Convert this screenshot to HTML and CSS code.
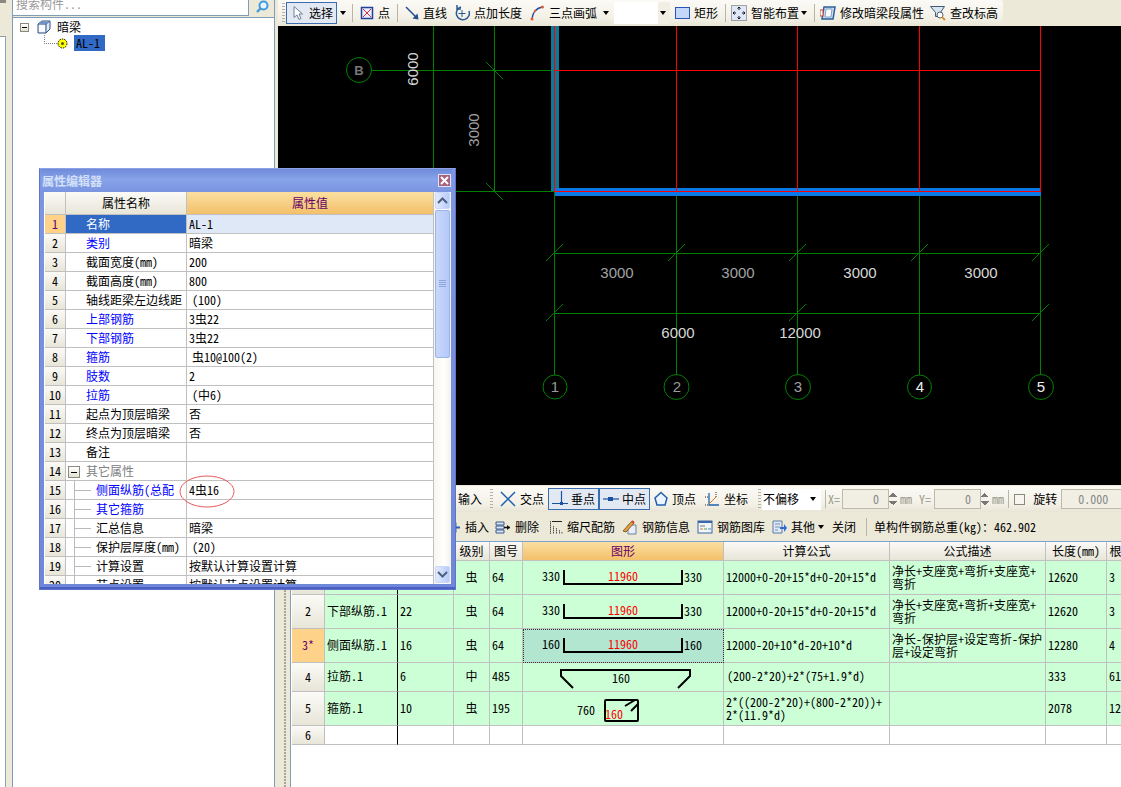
FILE: index.html
```html
<!DOCTYPE html>
<html lang="zh-CN">
<head>
<meta charset="utf-8">
<title>属性编辑器</title>
<link rel="stylesheet" href="styles.css">
</head>
<body>
<div class="app">
  <div class="rail"><div class="rail-tab"></div></div>
  <aside class="side">
    <div class="search">
      <div class="search-input"><span>搜索构件...</span></div>
      <div class="search-btn">
        <svg width="14" height="14" viewBox="0 0 14 14"><circle cx="8.5" cy="5.5" r="4" fill="#e8f4ff" stroke="#3f9be0" stroke-width="2"/><path d="M5.5 8.5 2 12" stroke="#3f9be0" stroke-width="2.4"/></svg>
      </div>
    </div>
    <div class="tree">
      <div class="tree-root">
        <span class="minus"></span>
        <svg class="cube" width="14" height="15" viewBox="0 0 14 15"><path d="M1 4 5 1h8v8l-4 4H1z" fill="#dfe9f7" stroke="#33507e"/><path d="M1 4h8v9M9 4l4-3" fill="none" stroke="#33507e"/><path d="M2 5h6v7H2z" fill="#f7fbff"/><path d="M5 1.500h8L9 4H1z" fill="#6f93c4"/></svg>
        <span>暗梁</span>
      </div>
      <div class="tree-leaf">
        <span class="dots"></span>
        <svg class="gear" width="11" height="11" viewBox="0 0 11 11"><circle cx="5.500" cy="5.500" r="4.500" fill="#ffff00" stroke="#000" stroke-dasharray="1.500 1"/><circle cx="5.500" cy="5.500" r="1.500" fill="#5a5a00"/></svg>
        <span class="leaf-sel">AL-1</span>
      </div>
    </div>
  </aside>

  <main class="main">
    <div class="top-wrap">
      <div class="bar-top">
        <span class="grip"></span>
        <div class="ti sel ml1"><svg width="12" height="16" viewBox="0 0 12 16"><path d="M2 1.500v11l3-2.500 2 4.500 2-1-2-4.500h3.500z" fill="#fff" stroke="#6f7f99"/></svg><span>选择</span></div>
        <span class="caret ml3"></span>
        <span class="sep ml6"></span>
        <div class="ti ml7"><svg width="14" height="14" viewBox="0 0 14 14"><rect x="1.500" y="1.500" width="11" height="11" fill="#e9eefc" stroke="#20409a" stroke-width="1.500"/><path d="m3 3 8 8M11 3l-8 8" stroke="#d03030"/></svg><span>点</span></div>
        <span class="sep ml7"></span>
        <div class="ti ml7"><svg width="14" height="16" viewBox="0 0 14 16"><path d="m1 2 11 11" stroke="#244f8f" stroke-width="1.500"/><path d="M13.500 14.500 12.500 8.500 7.500 13.500z" fill="#244f8f"/></svg><span>直线</span></div>
        <div class="ti ml7"><svg width="16" height="18" viewBox="0 0 16 18"><path d="M7 3a6.500 6.500 0 1 0 8 4" fill="none" stroke="#2a5a94" stroke-width="1.500"/><path d="M3 1v4h4" fill="none" stroke="#2a5a94" stroke-width="1.500"/><path d="M8 6v7M4.500 9.500h7" stroke="#2a5a94"/></svg><span>点加长度</span></div>
        <div class="ti ml8"><svg width="15" height="16" viewBox="0 0 15 16"><path d="M2 14Q3 4 12 2" fill="none" stroke="#2050a0" stroke-width="1.500"/><circle cx="2" cy="14" r="1.500" fill="#e06030"/><circle cx="5" cy="6" r="1.200" fill="#e06030"/><circle cx="12.500" cy="2" r="1.500" fill="#e06030"/></svg><span>三点画弧</span></div>
        <span class="caret ml6"></span>
        <div class="combo-top ml5"><span class="caret"></span></div>
        <div class="ti ml5"><svg width="15" height="12" viewBox="0 0 15 12"><rect x=".5" y=".5" width="14" height="11" fill="#c5d8fa" stroke="#2a55b8"/></svg><span>矩形</span></div>
        <span class="sep ml7"></span>
        <div class="ti ml5"><svg width="16" height="16" viewBox="0 0 16 16"><rect x=".5" y=".5" width="15" height="15" fill="#dfe8f8" stroke="#555" stroke-dasharray="1 1"/><path d="M8 2v3M6.500 3.500 8 2l1.500 1.500M8 14v-3M6.500 12.500 8 14l1.500-1.500M2 8h3M3.500 6.500 2 8l1.500 1.500M14 8h-3M12.500 6.500 14 8l-1.500 1.500" fill="none" stroke="#111"/></svg><span>智能布置</span></div>
        <span class="caret ml2"></span>
        <span class="sep ml7"></span>
        <div class="ti ml5"><svg width="16" height="16" viewBox="0 0 16 16"><path d="M4 2h11l-2 12H2z" fill="#cfe0f4" stroke="#2d5f96" stroke-width="1.500"/><path d="M6 4h6l-1 8H5z" fill="#fff" stroke="#7da0c8"/><rect x="0" y="5" width="3" height="6" fill="#fff" stroke="#d04030"/></svg><span>修改暗梁段属性</span></div>
        <div class="ti ml6"><svg width="16" height="16" viewBox="0 0 16 16"><path d="M.5 1.500h14l-4 6v4h-5v-4z" fill="#d8e4f0" stroke="#405a78"/><circle cx="10" cy="10" r="3" fill="#fff" stroke="#506070"/><path d="m12 12 3 3" stroke="#d89030" stroke-width="2"/></svg><span>查改标高</span></div>
      </div>
    </div>

    <div class="canvas-row">
      <svg class="canvas" width="843" height="459" viewBox="278 26 843 459">
        <g class="ln-g">
          <path d="M433.500 26V191M494.500 26V191M372 70.500H554M433 191.500H554"/>
          <path d="M554.500 191V375M676.500 191V375M797.500 191V375M919.500 191V375M1040.500 191V375"/>
          <path d="M554 253.500H1041M554 313.500H1041"/>
        </g>
        <g class="ln-d">
          <path d="M486 62 503 79M486 183 503 200"/>
          <path d="M546 261 563 244M668 261 685 244M789 261 806 244M911 261 928 244M1032 261 1049 244"/>
          <path d="M546 321 563 304M789 321 806 304M1032 321 1049 304"/>
        </g>
        <rect x="551" y="26" width="8" height="165" fill="#0c7a96"/>
        <rect x="555" y="188" width="486" height="8" fill="#0a78e6"/>
        <g class="ln-r">
          <path d="M554.500 26V191M676.500 26V191M797.500 26V191M919.500 26V191M1040.500 26V191"/>
          <path d="M554 70.500H1041M554 191.500H1041"/>
        </g>
        <g class="bub">
          <circle cx="359" cy="70" r="12.500"/>
          <circle cx="555" cy="387" r="12"/>
          <circle cx="676.500" cy="387" r="12.500"/>
          <circle cx="798" cy="387" r="12.500"/>
          <circle cx="919.500" cy="387" r="12"/>
          <circle cx="1041" cy="387" r="12.500"/>
        </g>
        <g class="dim">
          <text class="t-b" x="359" y="75" >B</text>
          <text class="t-g1" x="555" y="392">1</text>
          <text class="t-g1" x="677" y="392">2</text>
          <text class="t-g2" x="798" y="392">3</text>
          <text class="t-w" x="920" y="392">4</text>
          <text class="t-w" x="1041" y="392">5</text>
          <text class="t-g2" x="617" y="278">3000</text>
          <text class="t-g2" x="738" y="278">3000</text>
          <text class="t-l" x="860" y="278">3000</text>
          <text class="t-l" x="981" y="278">3000</text>
          <text class="t-l" x="678" y="338">6000</text>
          <text class="t-l" x="800" y="338">12000</text>
          <text class="t-l" transform="translate(418 69) rotate(-90)">6000</text>
          <text class="t-g2" transform="translate(479 130) rotate(-90)">3000</text>
        </g>
      </svg>
    </div>

    <div class="lower">
      <div class="split"></div>
      <div class="lower-main">
        <div class="bar b1">
          <span>输入</span>
          <span class="grip ml8"></span>
          <div class="ti ml7"><svg width="16" height="16" viewBox="0 0 16 16"><path d="m1 1 14 14M15 1 1 15" stroke="#2060b0" stroke-width="1.500"/></svg><span>交点</span></div>
          <div class="ti sel wide ml4"><svg width="16" height="16" viewBox="0 0 16 16"><path d="M9.500 0v12M0 12.500h16" stroke="#1c50a0" stroke-width="1.200"/><rect x="8" y="11" width="3" height="3" fill="#1c50a0"/></svg><span>垂点</span></div>
          <div class="ti sel wide jn"><svg width="16" height="16" viewBox="0 0 16 16"><path d="M0 8h16" stroke="#1c50a0" stroke-width="1.200"/><rect x="5" y="6" width="5" height="4" fill="#1c50a0"/></svg><span>中点</span></div>
          <div class="ti ml4"><svg width="14" height="16" viewBox="0 0 14 16"><path d="M7 1.500 13 7l-2 7H3L1 7z" fill="#eef4ff" stroke="#2060b0" stroke-width="1.500"/></svg><span>顶点</span></div>
          <div class="ti ml8"><svg width="16" height="16" viewBox="0 0 16 16"><path d="M5 2v12h10" fill="none" stroke="#2060b0" stroke-width="1.300"/><path d="m5 13 7-7" stroke="#d08020"/><path d="M1 6h3M1 14h3M12 1v3M12 5v2" stroke="#333" stroke-dasharray="1 1"/></svg><span>坐标</span></div>
          <span class="grip ml10"></span>
          <div class="combo ml1"><span>不偏移</span><span class="caret"></span></div>
          <span class="sep ml4"></span>
          <span class="off ml2">X=</span>
          <div class="num n1 ml2">0</div>
          <span class="spin"></span>
          <span class="off ml3">mm</span>
          <span class="off ml7">Y=</span>
          <div class="num n1 ml3">0</div>
          <span class="spin"></span>
          <span class="off ml3">mm</span>
          <span class="sep ml4"></span>
          <span class="check ml5"></span>
          <span class="ml8">旋转</span>
          <div class="num n2 ml4">0.000</div>
        </div>
        <div class="bar b2">
          <div class="ti"><svg width="14" height="14" viewBox="0 0 14 14"><rect x="1" y="3" width="8" height="9" fill="#dbe6f6" stroke="#4a6a9a"/><path d="M7 7.500h6" stroke="#2a5fb0" stroke-width="2"/></svg><span>插入</span></div>
          <div class="ti ml6"><svg width="16" height="16" viewBox="0 0 16 16"><path d="M1 3h8v3H1zM1 7h8v3H1zM1 11h8v3H1z" fill="#dbe6f6" stroke="#3a5a8a"/><path d="M9 8.500h6" stroke="#111" stroke-width="1.500"/><path d="m12 6 3 2.500-3 2.500" fill="#111"/></svg><span>删除</span></div>
          <div class="ti ml10"><svg width="14" height="16" viewBox="0 0 14 16"><path d="M1.500 2v13M4.500 7v8M7.500 9v6M10.500 11v4M13 13v2" stroke="#555" stroke-dasharray="1.500 .5"/><path d="M3 2.500h10" stroke="#222"/></svg><span>缩尺配筋</span></div>
          <div class="ti ml7"><svg width="16" height="16" viewBox="0 0 16 16"><path d="M6 6h8v9H6z" fill="#e8eef8" stroke="#6a7f9f"/><path d="m1 12 9-10 2 2-8 9z" fill="#e8a040" stroke="#80602a"/><path d="m10 2 2 2" stroke="#d04030" stroke-width="2"/></svg><span>钢筋信息</span></div>
          <div class="ti ml7"><svg width="16" height="16" viewBox="0 0 16 16"><rect x="1" y="2" width="14" height="12" fill="#f2f5fa" stroke="#3a68a8"/><path d="M1 2h14v2H1z" fill="#3a68a8"/><path d="M3 7h5" stroke="#777"/><path d="M3 10h3" stroke="#d08030"/><path d="M7 10h3" stroke="#50a050"/><path d="M11 10h3" stroke="#5080d0"/></svg><span>钢筋图库</span></div>
          <div class="ti ml7"><svg width="15" height="16" viewBox="0 0 15 16"><path d="M1 2h9v12H1z" fill="#dfe9f7" stroke="#5a7aa8"/><path d="M3 5h5M3 8h5M3 11h3" stroke="#7a8ea8"/><path d="M8 8h4V5l3 4-3 4v-3H8z" fill="#2a6fd0"/></svg><span>其他</span></div>
          <span class="caret ml3"></span>
          <span class="ml8">关闭</span>
          <span class="sep ml10"></span>
          <span class="ml7">单构件钢筋总重(kg)：462.902</span>
        </div>

        <div class="grid-wrap">
          <table class="grid">
            <colgroup>
              <col class="g0"><col class="g1"><col class="g2"><col class="g3"><col class="g4"><col class="g5"><col class="g6"><col class="g7"><col class="g8"><col class="g9">
            </colgroup>
            <thead>
              <tr class="gh">
                <th></th><th>筋号</th><th>直径(mm)</th><th>级别</th><th>图号</th><th class="hot">图形</th><th>计算公式</th><th>公式描述</th><th>长度(mm)</th><th>根数</th>
              </tr>
            </thead>
            <tbody>
              <tr class="r34">
                <th>1</th><td class="bl">上部纵筋.1</td><td>22</td><td class="c">虫</td><td>64</td>
                <td class="sh"><svg width="200" height="33" viewBox="0 0 200 33"><text class="n" x="28" y="20">330</text><text class="n" x="170" y="21">330</text><path class="bk" d="M41 9V23H159V9"/><text class="rd" x="100" y="20">11960</text></svg></td>
                <td>12000+0-20+15*d+0-20+15*d</td><td class="two">净长+支座宽+弯折+支座宽+<br>弯折</td><td>12620</td><td>3</td>
              </tr>
              <tr class="r34">
                <th>2</th><td class="bl">下部纵筋.1</td><td>22</td><td class="c">虫</td><td>64</td>
                <td class="sh"><svg width="200" height="33" viewBox="0 0 200 33"><text class="n" x="28" y="20">330</text><text class="n" x="170" y="21">330</text><path class="bk" d="M41 9V23H159V9"/><text class="rd" x="100" y="20">11960</text></svg></td>
                <td>12000+0-20+15*d+0-20+15*d</td><td class="two">净长+支座宽+弯折+支座宽+<br>弯折</td><td>12620</td><td>3</td>
              </tr>
              <tr class="r34">
                <th class="cur">3*</th><td class="bl">侧面纵筋.1</td><td>16</td><td class="c">虫</td><td>64</td>
                <td class="sh act"><svg width="198" height="31" viewBox="0 0 198 31"><text class="n" x="27" y="19">160</text><text class="n" x="169" y="20">160</text><path class="bk" d="M40 8V22H158V8"/><text class="rd" x="99" y="19">11960</text></svg></td>
                <td>12000-20+10*d-20+10*d</td><td class="two">净长-保护层+设定弯折-保护<br>层+设定弯折</td><td>12280</td><td>4</td>
              </tr>
              <tr class="r29">
                <th>4</th><td class="bl">拉筋.1</td><td>6</td><td class="c">中</td><td>485</td>
                <td class="sh"><svg width="200" height="28" viewBox="0 0 200 28"><path class="bk" d="M50 25 38 13V7H167V13L155 25"/><text class="n" x="98" y="20">160</text></svg></td>
                <td class="f1">(200-2*20)+2*(75+1.9*d)</td><td></td><td>333</td><td>61</td>
              </tr>
              <tr class="r34">
                <th>5</th><td class="bl">箍筋.1</td><td>10</td><td class="c">虫</td><td>195</td>
                <td class="sh"><svg width="200" height="33" viewBox="0 0 200 33"><text class="n" x="63" y="23">760</text><rect class="bk" x="82" y="8" width="33" height="21" rx="1"/><path class="bk" d="M102 14 112 8M108 19 115 12"/><text class="rd" x="91" y="27">160</text></svg></td>
                <td class="two">2*((200-2*20)+(800-2*20))+<br>2*(11.9*d)</td><td></td><td>2078</td><td>12</td>
              </tr>
              <tr class="r19 blank">
                <th>6</th><td class="bl"></td><td></td><td></td><td></td><td></td><td></td><td></td><td></td><td></td>
              </tr>
            </tbody>
          </table>
        </div>
      </div>
    </div>
  </main>

  <section class="dialog">
    <header class="dlg-title">
      <span>属性编辑器</span>
      <span class="close"><svg width="9" height="9" viewBox="0 0 9 9"><path d="m1 1 7 7M8 1 1 8" stroke="#fff" stroke-width="2"/></svg></span>
    </header>
    <div class="dlg-body">
      <div class="dlg-grid">
        <table class="props">
          <colgroup><col class="p0"><col class="p1"><col class="p2"></colgroup>
          <thead><tr class="ph"><th></th><th>属性名称</th><th class="hot">属性值</th></tr></thead>
          <tbody>
            <tr class="on"><th class="cur">1</th><td class="nm">名称</td><td>AL-1</td></tr>
            <tr><th>2</th><td class="nm blue">类别</td><td>暗梁</td></tr>
            <tr><th>3</th><td class="nm">截面宽度(mm)</td><td>200</td></tr>
            <tr><th>4</th><td class="nm">截面高度(mm)</td><td>800</td></tr>
            <tr><th>5</th><td class="nm">轴线距梁左边线距</td><td class="ind">(100)</td></tr>
            <tr><th>6</th><td class="nm blue">上部钢筋</td><td>3虫22</td></tr>
            <tr><th>7</th><td class="nm blue">下部钢筋</td><td>3虫22</td></tr>
            <tr><th>8</th><td class="nm blue">箍筋</td><td class="ind">虫10@100(2)</td></tr>
            <tr><th>9</th><td class="nm blue">肢数</td><td>2</td></tr>
            <tr><th>10</th><td class="nm blue">拉筋</td><td class="ind">(中6)</td></tr>
            <tr><th>11</th><td class="nm">起点为顶层暗梁</td><td>否</td></tr>
            <tr><th>12</th><td class="nm">终点为顶层暗梁</td><td>否</td></tr>
            <tr><th>13</th><td class="nm">备注</td><td></td></tr>
            <tr><th>14</th><td class="grp"><span class="minus"></span><span>其它属性</span></td><td></td></tr>
            <tr><th>15</th><td class="sub blue">侧面纵筋(总配</td><td>4虫16</td></tr>
            <tr><th>16</th><td class="sub blue">其它箍筋</td><td></td></tr>
            <tr><th>17</th><td class="sub">汇总信息</td><td>暗梁</td></tr>
            <tr><th>18</th><td class="sub">保护层厚度(mm)</td><td class="ind">(20)</td></tr>
            <tr><th>19</th><td class="sub">计算设置</td><td>按默认计算设置计算</td></tr>
            <tr><th>20</th><td class="sub">节点设置</td><td>按默认节点设置计算</td></tr>
          </tbody>
        </table>
      </div>
      <div class="scroll">
        <div class="sb-btn"><svg width="11" height="7" viewBox="0 0 11 7"><path d="m1 6 4.500-4.500L10 6" fill="none" stroke="#4d6185" stroke-width="2"/></svg></div>
        <div class="sb-thumb"><span></span></div>
        <div class="sb-track"></div>
        <div class="sb-btn"><svg width="11" height="7" viewBox="0 0 11 7"><path d="m1 1 4.500 4.500L10 1" fill="none" stroke="#4d6185" stroke-width="2"/></svg></div>
      </div>
    </div>
    <svg class="mark" width="56" height="33" viewBox="0 0 56 33"><ellipse cx="28" cy="16.500" rx="27" ry="15.500" fill="none" stroke="#e85a5a"/></svg>
  </section>
</div>
</body>
</html>
```

FILE: styles.css
```css
* { box-sizing: border-box; }
html, body { margin: 0; padding: 0; }
body {
  width: 1121px; height: 787px; overflow: hidden; background: #fff; color: #000;
  font: 12px/14px "Noto Sans Mono CJK SC", "Noto Sans CJK SC", "Liberation Mono", monospace;
}
.app { position: relative; display: flex; width: 1121px; height: 787px; overflow: hidden; }
.ml1 { margin-left: 1px; } .ml2 { margin-left: 2px; } .ml3 { margin-left: 3px; } .ml4 { margin-left: 4px; }
.ml5 { margin-left: 5px; } .ml6 { margin-left: 6px; } .ml7 { margin-left: 7px; } .ml8 { margin-left: 8px; }
.ml10 { margin-left: 10px; }

/* left rail */
.rail { width: 12px; flex: none; background: linear-gradient(90deg, #fff 0 5px, #8fa4bd 5px 6px, #ece9d8 6px); position: relative; }
.rail-tab { width: 6px; height: 37px; background: #ece9d8; border-top: 3px solid #8a8a80; border-bottom: 1px solid #9a9a90; }

/* tree side */
.side { width: 263px; flex: none; display: flex; flex-direction: column; border-left: 1px solid #7f9db9; border-right: 1px solid #7f9db9; background: #fff; }
.search { display: flex; height: 17px; flex: none; background: #ece9d8; }
.search-input { width: 236px; height: 16px; background: #fff; border-bottom: 1px solid #7f9db9; border-right: 1px solid #7f9db9; color: #9a9a9a; line-height: 8px; padding-left: 3px; overflow: hidden; }
.search-btn { flex: 1; height: 16px; display: flex; align-items: flex-start; justify-content: center; overflow: hidden; padding-top: 0; }
.tree { flex: 1; border-top: 1px solid #7f9db9; padding: 1px 0 0 7px; }
.tree-root { display: flex; align-items: center; height: 16px; }
.minus { display: inline-block; width: 9px; height: 9px; border: 1px solid #8a8a80; background: linear-gradient(#000, #000) center / 5px 1px no-repeat, linear-gradient(#fff, #e4e0d0); flex: none; }
.cube { margin: 0 6px 0 8px; }
.tree-leaf { display: flex; align-items: center; height: 16px; margin-top: 0; }
.dots { width: 13px; height: 9px; margin: -7px 0 0 24px; border-left: 1px dotted #808080; border-bottom: 1px dotted #808080; flex: none; }
.leaf-sel { background: #316ac5; height: 16px; width: 31px; margin-left: 6px; padding-left: 2px; line-height: 16px; }

/* main column */
.main { flex: 1; min-width: 0; display: flex; flex-direction: column; background: #ece9d8; }
.top-wrap { height: 26px; padding-left: 3px; background: #ece9d8; flex: none; }
.bar-top { display: inline-flex; align-items: center; height: 26px; padding: 0 5px 0 4px; background: linear-gradient(#fbfaf6, #f3f1e6 70%, #e8e5d6); border-radius: 0 3px 3px 0; }
.ti { display: flex; align-items: center; gap: 4px; height: 22px; white-space: nowrap; flex: none; }
.ti svg { flex: none; }
.sel { width: 51px; padding-left: 5px; background: #e3e9f3; border: 1px solid #3a6cb0; }
.bar-top .sel { gap: 5px; }
.wide { gap: 3px; padding-left: 3px; }
.jn { margin-left: 0; }
.grip { width: 3px; height: 20px; flex: none; background: repeating-linear-gradient(#b4b1a2 0 1px, transparent 1px 3px); }
.sep { width: 1px; height: 18px; flex: none; background: #b8b6a8; }
.caret { width: 0; height: 0; flex: none; border: 3px solid transparent; border-top: 4px solid #000; border-bottom: 0; }
.combo-top { width: 56px; height: 22px; background: linear-gradient(90deg, #fff 0 44px, #f1efe4 44px); display: flex; align-items: center; justify-content: flex-end; padding-right: 4px; flex: none; }

.canvas-row { height: 459px; flex: none; padding-left: 3px; background: #ece9d8; }
.canvas { display: block; background: #000; }
.ln-g path { stroke: #008000; fill: none; shape-rendering: crispEdges; }
.ln-d path { stroke: #008000; fill: none; }
.ln-r path { stroke: #ff0000; fill: none; shape-rendering: crispEdges; }
.bub circle { fill: #000; stroke: #008000; }
.dim text { font: 15px "Liberation Sans", sans-serif; text-anchor: middle; }
.dim .t-b { fill: #777; font-size: 13px; font-weight: 700; }
.t-g1 { fill: #999; }
.t-g2 { fill: #a2a2a2; }
.t-w { fill: #eee; }
.t-l { fill: #d8d8d8; }

/* lower panel */
.lower { flex: 1; min-height: 0; display: flex; }
.split { width: 15px; flex: none; background: repeating-linear-gradient(#a8a698 0 2px, #ece9d8 2px 3px) 9px 0 / 2px 100% no-repeat, #ece9d8; }
.lower-main { flex: 1; min-width: 0; display: flex; flex-direction: column; border-left: 1px solid #7f9db9; background: #fff; }
.bar { display: flex; align-items: center; flex: none; white-space: nowrap; overflow: hidden; background: linear-gradient(#fbfaf6, #f3f1e6 70%, #e8e5d6); }
.b1 { height: 27px; padding-left: 167px; border-top: 1px solid #ece9d8; }
.b2 { height: 29px; padding-left: 156px; background: #ece9d8; }
.combo { width: 59px; height: 21px; flex: none; background: #fff; display: flex; align-items: center; justify-content: space-between; padding: 0 5px 0 1px; }
.off { color: #9a9a8c; }
.num { height: 20px; flex: none; border: 1px solid #bdbaa8; background: #f1efe4; color: #888; text-align: right; padding-right: 9px; line-height: 18px; }
.n1 { width: 47px; }
.n2 { width: 70px; padding-right: 22px; }
.spin { width: 8px; height: 18px; flex: none; background:
  linear-gradient(135deg, transparent 50%, #777 50%) 0 3px / 4px 4px no-repeat,
  linear-gradient(225deg, transparent 50%, #777 50%) 4px 3px / 4px 4px no-repeat,
  linear-gradient(45deg, transparent 50%, #777 50%) 0 11px / 4px 4px no-repeat,
  linear-gradient(315deg, transparent 50%, #777 50%) 4px 11px / 4px 4px no-repeat; }
.check { width: 11px; height: 11px; flex: none; border: 1px solid #8a8a80; background: #f6f5ee; }

/* lower grid */
.grid-wrap { flex: 1; border-top: 1px solid #7ba2c8; overflow: hidden; padding-left: 1px; background: #fff; }
.grid { table-layout: fixed; width: 845px; border-collapse: separate; border-spacing: 0; }
.g0 { width: 33px; } .g1 { width: 73px; } .g2 { width: 56px; } .g3 { width: 36px; } .g4 { width: 33px; }
.g5 { width: 201px; } .g6 { width: 166px; } .g7 { width: 156px; } .g8 { width: 61px; } .g9 { width: 30px; }
.grid th, .grid td, .props th, .props td { padding: 0; border-right: 1px solid #c0c0c0; border-bottom: 1px solid #c0c0c0; font-weight: 400; white-space: nowrap; overflow: hidden; }
.grid th { background: linear-gradient(#fbfaf6, #e8e5d8); text-align: center; padding-bottom: 1px; }
.gh th { height: 19px; }
.hot, .grid th.hot, .props th.hot { background: linear-gradient(#fbdfa2, #f3c069); color: #660066; }
.grid td { background: #ccffd6; padding: 0 0 2px 2px; }
.r34 th, .r34 td { height: 34px; }
.r29 th, .r29 td { height: 29px; }
.r19 th, .r19 td { height: 19px; }
.blank td { background: #fff; }
.grid td.bl { border-right-color: #000; }
.grid td.c { text-align: center; padding-left: 0; }
.grid td.f1 { padding-left: 3px; }
.grid td.two { white-space: normal; line-height: 13px; padding-bottom: 1px; }
.grid td.sh { padding: 0; }
.grid td.sh svg { display: block; }
.grid td.act { background: #b3e6d1; outline: 1px dotted #333; outline-offset: -1px; padding: 1px; }
.grid th.cur, .props th.cur { background: #ffd28a; color: #660066; }
.sh text { font: 12px "Noto Sans Mono CJK SC", "Noto Sans CJK SC", monospace; text-anchor: middle; }
.sh .n { fill: #000; }
.sh .rd { fill: #ff0000; }
.bk { fill: none; stroke: #000; stroke-width: 2; }

/* dialog */
.dialog { position: absolute; left: 39px; top: 168px; width: 417px; height: 422px; display: flex; flex-direction: column; padding: 0 4px 5px 4px; background: linear-gradient(#7e97e0, #6f87d8); border: 1px solid #5f74c8; border-top-color: #8da2e6; box-shadow: inset 0 -2px 0 #4c5fc4; }
.dlg-title { height: 23px; flex: none; display: flex; align-items: center; justify-content: space-between; margin: 0 -1px 0 -3px; padding: 0 1px 0 1px; background: linear-gradient(#6f8ad9, #87a3e9 45%, #7a94e0); color: #d3e0f8; font-weight: 700; font-size: 12px; }
.close { width: 13px; height: 13px; display: flex; align-items: center; justify-content: center; background: #a8627e; border: 1px solid #dbe3f6; }
.dlg-body { flex: 1; min-height: 0; display: flex; background: #fff; }
.dlg-grid { width: 390px; flex: none; overflow: hidden; padding-left: 1px; background: #fff; }
.props { table-layout: fixed; width: 389px; border-collapse: separate; border-spacing: 0; }
.p0 { width: 21px; } .p1 { width: 121px; } .p2 { width: 247px; }
.props th { background: linear-gradient(#fbfaf6, #e8e5d8); text-align: center; height: 19px; }
.props td { height: 19px; padding-left: 2px; background: #fff; }
.props .ph th { height: 23px; }
.nm { padding-left: 20px !important; overflow: hidden; }
.blue { color: #0000ff; }
.on td { background: #dfe8f6; }
.on td.nm { background: #316ac5; color: #fff; }
.ind { padding-left: 5px !important; }
.grp { color: #808080; padding-left: 2px !important; }
.grp .minus { width: 12px; height: 12px; margin-right: 6px; vertical-align: -2px; background: linear-gradient(#000, #000) center / 6px 1px no-repeat, linear-gradient(#fff, #e4e0d0); }
.sub { padding-left: 30px !important; background: linear-gradient(#bbb, #bbb) 8px 0 / 1px 100% no-repeat, linear-gradient(#bbb, #bbb) 8px 50% / 17px 1px no-repeat, #fff !important; }
.scroll { flex: 1; display: flex; flex-direction: column; padding: 0 1px 1px; background: linear-gradient(90deg, #f7f6f0, #fff 60%, #f2f1ea); }
.sb-btn { height: 17px; flex: none; display: flex; align-items: center; justify-content: center; background: linear-gradient(90deg, #e2ebfd, #b7cafa); border: 1px solid #c9d7f8; border-radius: 2px; }
.sb-thumb { height: 148px; flex: none; margin-top: 1px; display: flex; align-items: center; justify-content: center; background: linear-gradient(90deg, #c8d8fb, #b5c8f9); border: 1px solid #9db3e8; border-radius: 2px; }
.sb-thumb span { width: 7px; height: 8px; background: repeating-linear-gradient(#8ea6dd 0 1px, transparent 1px 2px); }
.sb-track { flex: 1; }
.mark { position: absolute; left: 139px; top: 306px; pointer-events: none; }
```
